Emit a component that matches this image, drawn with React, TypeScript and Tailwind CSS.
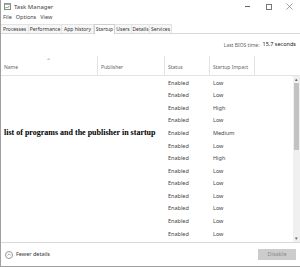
import React from 'react';

const impacts = ['Low', 'Low', 'High', 'Low', 'Medium', 'Low', 'High', 'Low', 'Low', 'Low', 'Low', 'Low', 'Low', 'Medium'];

const tabs = [
  { label: 'Processes', w: 'w-[28px]' },
  { label: 'Performance', w: 'w-[33px]' },
  { label: 'App history', w: 'w-[32px]' },
  { label: 'Startup', w: 'w-[21px]' },
  { label: 'Users', w: 'w-[17px]' },
  { label: 'Details', w: 'w-[18px]' },
  { label: 'Services', w: 'w-[22px]' },
];

function AppIcon() {
  return (
    <svg width="7" height="7" viewBox="0 0 7 7">
      <rect x="0.5" y="0.5" width="6" height="6" fill="#fff" stroke="#8a8a8a" />
      <rect x="0.5" y="0.5" width="6" height="1.5" fill="#9ab" />
      <polyline points="1,5.5 2.5,4 3.5,5 5.5,2.8" fill="none" stroke="#3a9a3a" strokeWidth="0.8" />
    </svg>
  );
}

export default function App() {
  return (
    <div
      className="w-[300px] h-[267px] flex flex-col bg-white border-l border-b border-[#a0a0a0] overflow-hidden text-[#333]"
      style={{ fontFamily: '"Noto Sans", "Open Sans", sans-serif' }}
    >
      {/* ─── Title bar ─── */}
      <div className="h-[13px] flex items-center pl-[3px] flex-shrink-0">
        <AppIcon />
        <span className="ml-[3px] text-[6px] leading-none text-[#444]">Task Manager</span>
        <div className="ml-auto flex items-center h-full">
          <div className="w-[21px] flex justify-center">
            <div className="w-[5px] h-px bg-[#666]" />
          </div>
          <div className="w-[21px] flex justify-center">
            <div className="w-[6px] h-[6px] border border-[#777]" />
          </div>
          <div className="w-[21px] flex justify-center">
            <svg width="7" height="7" viewBox="0 0 7 7">
              <path d="M0.5 0.5 L6.5 6.5 M6.5 0.5 L0.5 6.5" stroke="#666" strokeWidth="0.6" />
            </svg>
          </div>
        </div>
      </div>

      {/* ─── Menu ─── */}
      <div className="h-[10px] flex items-center gap-[4px] pl-[2px] text-[5.5px] leading-none text-[#444] flex-shrink-0">
        <span>File</span>
        <span>Options</span>
        <span>View</span>
      </div>

      {/* ─── Tabs ─── */}
      <div className="h-[10px] flex border-b border-[#d9d9d9] flex-shrink-0 mt-px">
        {tabs.map(t => (
          <div
            key={t.label}
            className={
              t.label === 'Startup'
                ? `${t.w} flex items-center justify-center whitespace-nowrap text-[5px] leading-none text-[#333] bg-white border-x border-t border-[#d0d0d0] -mb-px`
                : `${t.w} flex items-center justify-center whitespace-nowrap text-[5px] leading-none text-[#333] bg-[#f7f7f7] border-r border-t border-[#e3e3e3]`
            }
          >
            {t.label}
          </div>
        ))}
      </div>

      {/* ─── BIOS time ─── */}
      <div className="h-[22px] flex items-center justify-end pr-[4px] text-[5px] leading-none text-[#666] flex-shrink-0">
        <span>Last BIOS time:</span>
        <span className="ml-[3px] text-[5.5px] text-[#222]">15.7 seconds</span>
      </div>

      {/* ─── Column header ─── */}
      <div className="h-[20px] flex border-b border-[#e3e3e3] text-[5px] leading-none text-[#666] flex-shrink-0">
        <div className="w-[97px] relative flex items-end pb-[5px] pl-[3px] border-r border-[#e3e3e3]">
          <span className="absolute left-[45px] top-[2px] text-[6px] text-[#888]">⌃</span>
          Name
        </div>
        <div className="w-[67px] flex items-end pb-[5px] pl-[3px] border-r border-[#e3e3e3]">Publisher</div>
        <div className="w-[45px] flex items-end pb-[5px] pl-[3px] border-r border-[#e3e3e3]">Status</div>
        <div className="w-[45px] flex items-end pb-[5px] pl-[3px] border-r border-[#e3e3e3]">Startup Impact</div>
        <div className="flex-1" />
      </div>

      {/* ─── Rows ─── */}
      <div className="flex flex-1 min-h-0 border-b border-[#d9d9d9]">
        <div className="flex-1 flex flex-col overflow-hidden pt-[1px]">
          {impacts.map((imp, i) => (
            <div key={i} className="h-[12.6px] flex-shrink-0 flex items-center text-[5.5px] leading-none text-[#444]">
              <div className="w-[97px] pl-[3px] relative">
                {i === 4 && (
                  <span
                    className="absolute left-[3px] -top-[5px] whitespace-nowrap text-[8px] font-bold text-black"
                    style={{ fontFamily: '"Liberation Serif", serif' }}
                  >
                    list of programs and the publisher in startup
                  </span>
                )}
              </div>
              <div className="w-[67px]" />
              <div className="w-[45px] pl-[3px]">Enabled</div>
              <div className="w-[45px] pl-[3px]">{imp}</div>
            </div>
          ))}
        </div>
        {/* scrollbar */}
        <div className="w-[7px] flex flex-col bg-[#f0f0f0]">
          <div className="h-[7px] flex items-center justify-center text-[5px] leading-none text-[#606060]">▴</div>
          <div className="h-[67px] mx-px bg-[#c2c2c2]" />
          <div className="flex-1" />
          <div className="h-[7px] flex items-center justify-center text-[5px] leading-none text-[#606060]">▾</div>
        </div>
      </div>

      {/* ─── Footer ─── */}
      <div className="h-[23px] flex items-center pl-[4px] pr-[4px] flex-shrink-0">
        <div className="w-[8px] h-[8px] rounded-full border border-[#999] flex items-center justify-center">
          <svg width="4" height="3" viewBox="0 0 4 3">
            <path d="M0.3 2.5 L2 0.8 L3.7 2.5" fill="none" stroke="#666" strokeWidth="0.6" />
          </svg>
        </div>
        <span className="ml-[3px] text-[5.5px] leading-none text-[#333]">Fewer details</span>
        <div className="ml-auto w-[38px] h-[11px] bg-[#cccccc] flex items-center justify-center text-[5.5px] leading-none text-[#8a8a8a]">
          Disable
        </div>
      </div>
    </div>
  );
}
